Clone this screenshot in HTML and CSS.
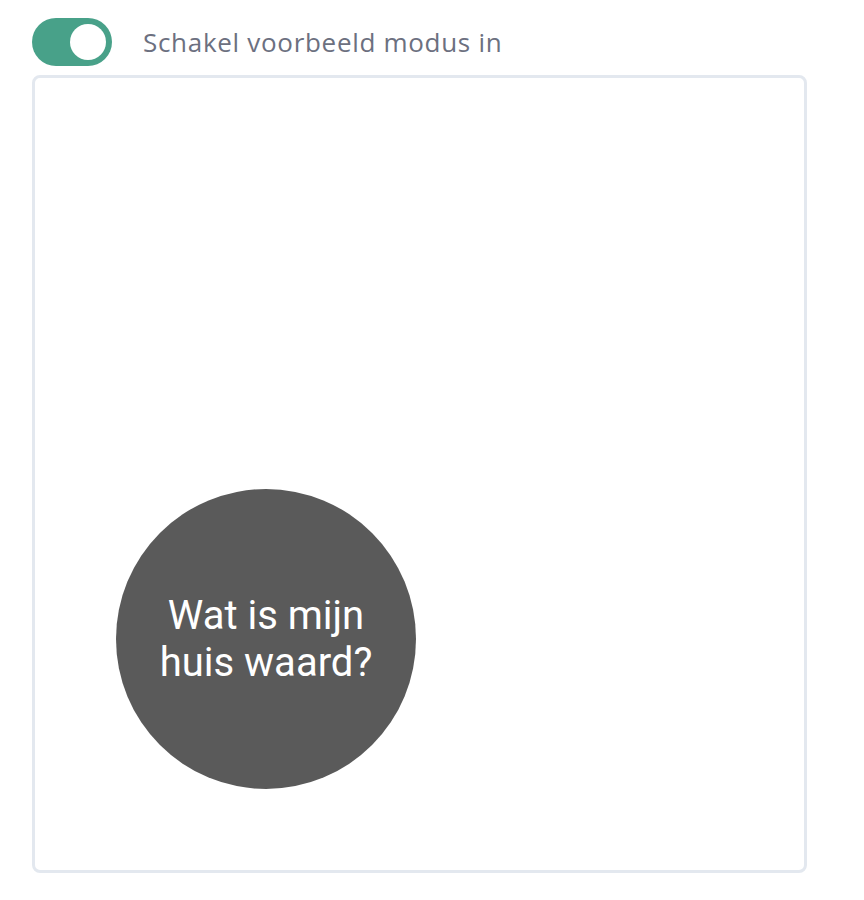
FILE: index.html
```html
<!DOCTYPE html>
<html lang="nl">
<head>
<meta charset="utf-8">
<title>Voorbeeld modus</title>
<link rel="stylesheet" href="styles.css">
</head>
<body>
<div class="page">
  <label class="toggle-row">
    <span class="toggle" role="switch" aria-checked="true"><span class="knob"></span></span>
    <span class="toggle-label">Schakel voorbeeld modus in</span>
  </label>
  <div class="preview">
    <div class="bubble">
      <span class="bubble-text">Wat is mijn<br>huis waard?</span>
    </div>
  </div>
</div>
</body>
</html>
```

FILE: styles.css
```css
html, body {
  margin: 0;
  padding: 0;
  background: #ffffff;
}

.page {
  padding: 18px 0 0 32px;
}

.toggle-row {
  display: flex;
  align-items: center;
  gap: 31px;
  height: 48px;
}

.toggle {
  box-sizing: border-box;
  width: 80px;
  height: 48px;
  border-radius: 24px;
  background: #48a189;
  padding: 6px;
  display: flex;
  justify-content: flex-end;
  align-items: center;
  flex: none;
}

.knob {
  width: 36px;
  height: 36px;
  border-radius: 50%;
  background: #ffffff;
}

.toggle-label {
  font-family: "Open Sans", "Lato", sans-serif;
  font-size: 26px;
  color: #6c7080;
  letter-spacing: 0.7px;
}

.preview {
  box-sizing: border-box;
  margin-top: 9px;
  width: 775px;
  height: 798px;
  border: 3px solid #e3e8ef;
  border-radius: 8px;
  position: relative;
  background: #ffffff;
}

.bubble {
  position: absolute;
  left: 81px;
  bottom: 81px;
  width: 300px;
  height: 300px;
  border-radius: 50%;
  background: #5a5a5a;
  display: flex;
  align-items: center;
  justify-content: center;
}

.bubble-text {
  font-family: "Roboto", sans-serif;
  font-size: 40px;
  line-height: 47px;
  color: #ffffff;
  text-align: center;
}
```
